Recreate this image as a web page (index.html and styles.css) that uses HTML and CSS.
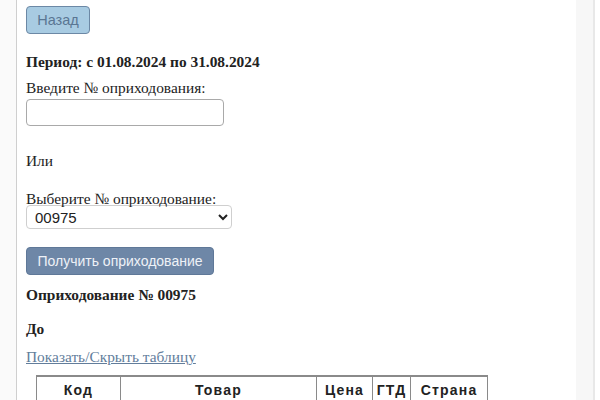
FILE: index.html
```html
<!DOCTYPE html>
<html lang="ru">
<head>
  <meta charset="UTF-8">
  <title>Оприходование</title>
  <link rel="stylesheet" href="styles.css">
</head>
<body>

<div class="page">
  <div class="gutter"></div>
  <div class="content">
    <button class="btn btn-back">Назад</button>

    <p class="period">Период: с 01.08.2024 по 31.08.2024</p>

    <label class="field-label" for="num">Введите № оприходования:</label>
    <input type="text" class="field-input" id="num">

    <p class="or">Или</p>

    <label class="field-label" for="pick">Выберите № оприходование:</label>
    <select class="field-select" id="pick">
      <option>00975</option>
    </select>

    <button class="btn btn-get">Получить оприходование</button>

    <p class="doc-title">Оприходование № 00975</p>
    <p class="doc-sub">До</p>
    <a href="#" class="toggle-link">Показать/Скрыть таблицу</a>

    <table class="items">
      <tr>
        <th class="col-code">Код</th>
        <th class="col-name">Товар</th>
        <th class="col-price">Цена</th>
        <th class="col-gtd">ГТД</th>
        <th class="col-country">Страна</th>
      </tr>
    </table>
  </div>
  <div class="side"></div>
</div>

</body>
</html>
```

FILE: styles.css
```css
body {
  margin: 0;
  padding: 0;
  font-family: "Liberation Serif", "Times New Roman", serif;
  font-size: 15.4px;
  color: #222;
  background: #fff;
}

.page {
  display: flex;
  height: 400px;
  overflow: hidden;
}

.gutter {
  width: 16px;
  background: #fafafa;
}

.content {
  flex: 1;
  border-left: 1px solid #cfcfcf;
  padding: 6px 0 0 9px;
  background: #fff;
}

.side {
  width: 17px;
  background: #f7f7f7;
  border-right: 2px solid #e8e8e8;
  margin-right: 5px;
}

.btn {
  display: block;
  font-family: "Liberation Sans", Arial, sans-serif;
  font-size: 14px;
  border-radius: 4px;
  cursor: pointer;
}

.btn-back {
  width: 64px;
  height: 28px;
  font-size: 14.5px;
  background: #a8cbe2;
  border: 1px solid #6c88a5;
  color: #5a7693;
}

.period {
  margin: 19px 0 8px;
  font-weight: bold;
}

.field-label {
  display: block;
}

.field-input {
  display: block;
  width: 198px;
  height: 27px;
  box-sizing: border-box;
  margin-top: 2px;
  border: 1px solid #a9a9a9;
  border-radius: 4px;
}

.or {
  margin: 26px 0 20px;
}

.field-select {
  display: block;
  width: 206px;
  height: 24px;
  box-sizing: border-box;
  margin-top: -3px;
  padding-left: 4px;
  font-family: "Liberation Sans", Arial, sans-serif;
  font-size: 15px;
  color: #222;
  border: 1px solid #cfcfcf;
  border-radius: 4px;
  background: #fff;
}

.btn-get {
  margin-top: 18px;
  width: 188px;
  height: 28px;
  background: #6e87a7;
  border: 1px solid #5f7898;
  color: #eef2f7;
}

.doc-title {
  margin: 11px 0 0;
  font-weight: bold;
}

.doc-sub {
  margin: 16px 0 10px;
  font-weight: bold;
}

.toggle-link {
  color: #627d9b;
}

.items {
  margin: 9px 0 0 10px;
  border-collapse: collapse;
  font-family: "Liberation Sans", Arial, sans-serif;
}

.items th {
  border: 2px solid #8a8a8a;
  border-width: 2px 1px 1px 1px;
  padding: 5px 3px;
  font-size: 14px;
  letter-spacing: 1.2px;
  color: #222;
}

.col-code { width: 77px; }
.col-name { width: 189px; }
.col-price { width: 49px; }
.col-gtd { width: 31px; }
.col-country { width: 70px; }
```
